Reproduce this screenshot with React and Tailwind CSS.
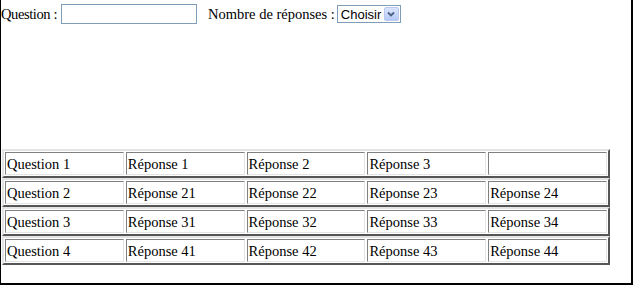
export default function App() {
  const rows = [
    ["Question 1", "Réponse 1", "Réponse 2", "Réponse 3", ""],
    ["Question 2", "Réponse 21", "Réponse 22", "Réponse 23", "Réponse 24"],
    ["Question 3", "Réponse 31", "Réponse 32", "Réponse 33", "Réponse 34"],
    ["Question 4", "Réponse 41", "Réponse 42", "Réponse 43", "Réponse 44"],
  ];

  return (
    <div
      className="w-[633px] h-[285px] bg-white border-l border-r-2 border-b-2 border-black text-black text-[14.5px] overflow-hidden"
      style={{ fontFamily: "'Liberation Serif', 'Times New Roman', serif" }}
    >
      {/* ── Form row ── */}
      <div className="flex items-center h-[27px] pt-[1px] leading-none">
        <span className="tracking-[-0.4px]">Question :</span>
        <input
          type="text"
          className="ml-[4px] w-[136px] h-[20px] border border-[#7f9db9] bg-white outline-none"
        />
        <span className="ml-[11px]">Nombre de réponses :</span>
        <div className="ml-[2px] flex items-center w-[64px] h-[18px] border border-[#7f9db9] bg-white">
          <span
            className="flex-1 pl-[3px] text-[13px] leading-none"
            style={{ fontFamily: "'Liberation Sans', Arial, sans-serif" }}
          >
            Choisir
          </span>
          <div className="w-[15px] h-[14px] mr-[1px] rounded-[2px] border border-[#b9c9ef] bg-gradient-to-b from-[#dbe6fd] to-[#b5c8f6] flex items-center justify-center">
            <svg width="8" height="6" viewBox="0 0 8 6">
              <path d="M1 1.5 L4 4.5 L7 1.5" fill="none" stroke="#4d6185" strokeWidth="1.8" />
            </svg>
          </div>
        </div>
      </div>

      {/* ── Tables ── */}
      <div className="mt-[122px] ml-[1px] w-[608px] flex flex-col">
        {rows.map((cells, i) => (
          <div
            key={i}
            className="h-[29px] flex gap-[2px] p-[1px] border-2 border-t-[#e4e4e4] border-l-[#e4e4e4] border-b-[#555] border-r-[#555]"
          >
            {cells.map((c, j) => (
              <div
                key={j}
                className="flex-1 flex items-center pl-[1px] pt-[1px] leading-none border border-t-[#808080] border-l-[#808080] border-b-[#e4e4e4] border-r-[#e4e4e4]"
              >
                {c}
              </div>
            ))}
          </div>
        ))}
      </div>
    </div>
  );
}
